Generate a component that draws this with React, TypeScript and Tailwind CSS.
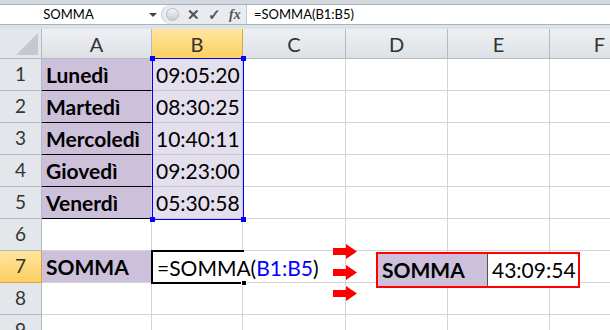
import React from 'react'

const cols = [
  { key: 'A', w: 110 },
  { key: 'B', w: 91 },
  { key: 'C', w: 103 },
  { key: 'D', w: 102 },
  { key: 'E', w: 102 },
  { key: 'F', w: 100 },
]

const days = ['Lunedì', 'Martedì', 'Mercoledì', 'Giovedì', 'Venerdì']
const times = ['09:05:20', '08:30:25', '10:40:11', '09:23:00', '05:30:58']

function FormulaBar() {
  return (
    <div className="h-[29px] bg-[#dde2e8] border-t-[4px] border-[#d3d8df] flex flex-col">
      <div className="h-[21px] flex border-y border-[#a9b1bc] bg-white">
        <div className="w-[161px] flex items-center relative">
          <span className="flex-1 text-center text-[13px] text-black pr-6">SOMMA</span>
          <span className="absolute right-[4px] top-[8px] w-0 h-0 border-l-[4px] border-r-[4px] border-t-[4px] border-l-transparent border-r-transparent border-t-[#444]" />
        </div>
        <div className="w-[85px] flex items-center bg-[#e8ebef] border-l border-[#c3c9d1] rounded-l-[10px] gap-[8px] pl-[4px]">
          <span className="w-[13px] h-[13px] rounded-full bg-gradient-to-b from-[#f4f5f7] to-[#c7ccd3] border border-[#b7bdc5]" />
          <span className="text-[15px] font-bold text-[#555] leading-none">✕</span>
          <span className="text-[15px] font-bold text-[#555] leading-none">✓</span>
          <span className="text-[14px] italic font-bold text-[#555] leading-none" style={{ fontFamily: '"Liberation Serif", serif' }}>fx</span>
        </div>
        <div className="flex-1 flex items-center border-l border-[#c3c9d1] pl-[7px] text-[13px] text-black">
          =SOMMA(B1:B5)
        </div>
      </div>
    </div>
  )
}

function HeaderCell({ label, w, active }: { label: string; w: number; active?: boolean }) {
  return (
    <div
      className={
        'shrink-0 h-[30px] flex items-center justify-center border-r border-b text-[20px] ' +
        (active
          ? 'bg-gradient-to-b from-[#ffe69d] to-[#fccf5f] border-[#d9a34a] text-[#333]'
          : 'bg-gradient-to-b from-[#eef0f3] to-[#dde1e6] border-[#b3bac4] text-[#333]')
      }
      style={{ width: w }}
    >
      {label}
    </div>
  )
}

function RowHead({ n, active }: { n: number; active?: boolean }) {
  return (
    <div
      className={
        'shrink-0 w-[42px] h-full flex items-center justify-center border-r border-b text-[19px] text-[#333] ' +
        (active ? 'bg-gradient-to-b from-[#ffe69d] to-[#fccf5f] border-[#d9a34a]' : 'bg-[#e3e7ec] border-[#b3bac4]')
      }
    >
      {n}
    </div>
  )
}

function Row({ n }: { n: number }) {
  const i = n - 1
  const data = n <= 5
  return (
    <div className="flex h-[32px]">
      <RowHead n={n} active={n === 7} />
      {cols.map((c) => {
        let cls = 'shrink-0 h-full border-r border-b border-[#d4d4d4] flex items-center'
        let content: React.ReactNode = null
        if (c.key === 'A' && data) {
          cls = 'shrink-0 h-full border-r border-b border-r-[#d4d4d4] border-b-black bg-[#ccc0da] flex items-center pl-[4px] font-bold text-[21px]'
          content = days[i]
        } else if (c.key === 'B' && data) {
          cls = 'shrink-0 h-full border-r border-b border-[#c9c4d0] bg-[#e4dfec] flex items-center pl-[4px] text-[21px]'
          content = times[i]
        } else if (c.key === 'A' && n === 7) {
          cls = 'shrink-0 h-full border-r border-b border-[#d4d4d4] bg-[#ccc0da] flex items-center pl-[4px] font-bold text-[21px]'
          content = 'SOMMA'
        }
        return (
          <div key={c.key} className={cls} style={{ width: c.w }}>
            {content}
          </div>
        )
      })}
    </div>
  )
}

function Arrow() {
  return (
    <svg width="25" height="15" viewBox="0 0 25 15">
      <path d="M0 4 H13 V0 L24 7.5 L13 15 V11 H0 Z" fill="#ff0000" />
    </svg>
  )
}

export default function App() {
  return (
    <div className="w-[610px] h-[330px] overflow-hidden bg-white relative text-black" style={{ fontFamily: 'Lato, "Open Sans", sans-serif' }}>
      <FormulaBar />
      <div className="flex">
        <div className="shrink-0 w-[42px] h-[30px] bg-[#e3e7ec] border-r border-b border-[#b3bac4] relative overflow-hidden">
          <svg className="absolute right-[3px] bottom-[3px]" width="22" height="22" viewBox="0 0 22 22">
            <path d="M22 0 V22 H0 Z" fill="#c5c9cf" />
          </svg>
        </div>
        {cols.map((c) => (
          <HeaderCell key={c.key} label={c.key} w={c.w} active={c.key === 'B'} />
        ))}
      </div>
      <div className="relative">
        {[1, 2, 3, 4, 5, 6, 7, 8, 9].map((n) => (
          <Row key={n} n={n} />
        ))}

        {/* selection B1:B5 */}
        <div className="absolute left-[152px] top-[-1px] w-[92px] h-[162px] border border-[#0000ff] pointer-events-none">
          <span className="absolute -left-[3px] -top-[3px] w-[5px] h-[5px] bg-[#0000ff]" />
          <span className="absolute -right-[3px] -top-[3px] w-[5px] h-[5px] bg-[#0000ff]" />
          <span className="absolute -left-[3px] -bottom-[3px] w-[5px] h-[5px] bg-[#0000ff]" />
          <span className="absolute -right-[3px] -bottom-[3px] w-[5px] h-[5px] bg-[#0000ff]" />
        </div>

        {/* active cell B7, in edit mode */}
        <div className="absolute left-[151px] top-[191px] w-[93px] h-[34px] border-2 border-r-0 border-black bg-white">
          <span className="absolute left-[4px] top-[2px] whitespace-nowrap text-[21px] leading-[28px] bg-white pr-[2px]">
            =SOMMA(<span className="text-[#0000ff]">B1:B5</span>)
          </span>
          <span className="absolute -right-[3px] -bottom-[4px] w-[6px] h-[6px] bg-black border border-white" />
        </div>

        {/* arrows */}
        <div className="absolute left-[333px] top-[185px] flex flex-col gap-[6px]">
          <Arrow />
          <Arrow />
          <Arrow />
        </div>

        {/* result box */}
        <div className="absolute left-[376px] top-[193px] w-[204px] h-[36px] border-2 border-[#ff0000] flex">
          <div className="w-[110px] bg-[#ccc0da] border-r border-[#555] flex items-center pl-[4px] font-bold text-[21px]">SOMMA</div>
          <div className="flex-1 bg-white flex items-center pl-[4px] text-[21px]">43:09:54</div>
        </div>
      </div>
    </div>
  )
}
